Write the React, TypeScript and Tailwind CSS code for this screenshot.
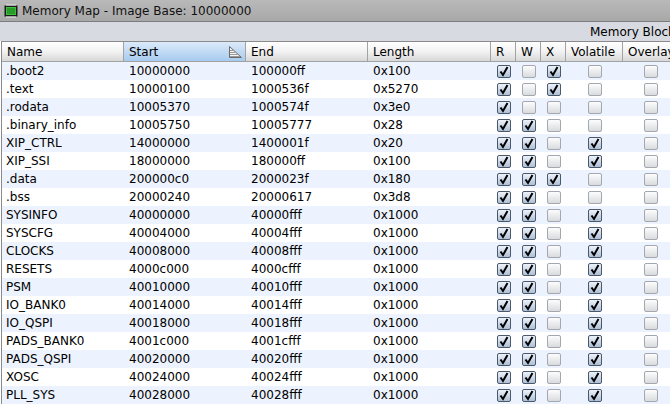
import React from "react";

type Row = {
  name: string;
  start: string;
  end: string;
  length: string;
  r: boolean;
  w: boolean;
  x: boolean;
  volatile: boolean;
  overlay: boolean;
};

const io = (name: string, start: string, end: string): Row => ({
  name,
  start,
  end,
  length: "0x1000",
  r: true,
  w: true,
  x: false,
  volatile: true,
  overlay: false
});

const rows: Row[] = [
  { name: ".boot2", start: "10000000", end: "100000ff", length: "0x100", r: true, w: false, x: true, volatile: false, overlay: false },
  { name: ".text", start: "10000100", end: "1000536f", length: "0x5270", r: true, w: false, x: true, volatile: false, overlay: false },
  { name: ".rodata", start: "10005370", end: "1000574f", length: "0x3e0", r: true, w: false, x: false, volatile: false, overlay: false },
  { name: ".binary_info", start: "10005750", end: "10005777", length: "0x28", r: true, w: true, x: false, volatile: false, overlay: false },
  { name: "XIP_CTRL", start: "14000000", end: "1400001f", length: "0x20", r: true, w: true, x: false, volatile: true, overlay: false },
  { name: "XIP_SSI", start: "18000000", end: "180000ff", length: "0x100", r: true, w: true, x: false, volatile: true, overlay: false },
  { name: ".data", start: "200000c0", end: "2000023f", length: "0x180", r: true, w: true, x: true, volatile: false, overlay: false },
  { name: ".bss", start: "20000240", end: "20000617", length: "0x3d8", r: true, w: true, x: false, volatile: false, overlay: false },
  io("SYSINFO", "40000000", "40000fff"),
  io("SYSCFG", "40004000", "40004fff"),
  io("CLOCKS", "40008000", "40008fff"),
  io("RESETS", "4000c000", "4000cfff"),
  io("PSM", "40010000", "40010fff"),
  io("IO_BANK0", "40014000", "40014fff"),
  io("IO_QSPI", "40018000", "40018fff"),
  io("PADS_BANK0", "4001c000", "4001cfff"),
  io("PADS_QSPI", "40020000", "40020fff"),
  io("XOSC", "40024000", "40024fff"),
  io("PLL_SYS", "40028000", "40028fff")
];

const cols = "grid grid-cols-[122px_122px_122px_123px_25px_25px_25px_57px_60px]";

function ChipIcon() {
  return (
    <svg width="16" height="16" viewBox="0 0 16 16" className="shrink-0">
      <rect x="1.5" y="2.5" width="13" height="11" fill="#1c1c1c" />
      <rect x="3" y="4" width="10" height="8" fill="#3fbf3f" />
      <rect x="4" y="5" width="8" height="6" fill="#2a9a2a" />
      {[4, 6, 8, 10, 12].map((x) => (
        <g key={x}>
          <rect x={x - 0.5} y="1" width="1" height="2" fill="#e8e8e8" />
          <rect x={x - 0.5} y="13" width="1" height="2" fill="#e8e8e8" />
        </g>
      ))}
    </svg>
  );
}

function SortIcon() {
  return (
    <svg width="14" height="12" viewBox="0 0 14 12" className="shrink-0">
      <path d="M1.5 0.5 L1.5 11.5 L13.5 11.5 Z" fill="#f4f4f4" stroke="#6a6a6a" strokeWidth="1" />
      <path d="M2 4.5 H5 M2 6.5 H7 M2 8.5 H9.5 M2 10.5 H12" stroke="#9a9a9a" strokeWidth="1" />
    </svg>
  );
}

function Check({ on }: { on: boolean }) {
  return (
    <div
      className={
        on
          ? "relative h-[13px] w-[14px] rounded-[2px] border border-[#4a586c] bg-gradient-to-b from-[#eef3fa] to-[#aebfd6]"
          : "relative h-[13px] w-[14px] rounded-[2px] border border-[#a3a8b0] bg-gradient-to-b from-[#fdfdfd] to-[#d9dbde]"
      }
    >
      {on && (
        <svg width="12" height="11" viewBox="0 0 12 11" className="absolute left-0 top-0">
          <path d="M2.5 5.5 L5 9 L9.5 1" fill="none" stroke="#000" strokeWidth="2" />
        </svg>
      )}
    </div>
  );
}

function HeadCell({ label, sorted }: { label: string; sorted?: boolean }) {
  return (
    <div
      className={
        (sorted
          ? "bg-gradient-to-b from-[#dceafa] to-[#a6cbef] "
          : "bg-gradient-to-b from-[#ffffff] via-[#f2f2f2] to-[#d8d8d8] ") +
        "flex h-[20px] items-center justify-between border-r border-b border-[#a2a2a2] pl-[5px] pr-[3px]"
      }
    >
      <span className="whitespace-nowrap">{label}</span>
      {sorted && <SortIcon />}
    </div>
  );
}

export default function App() {
  return (
    <div
      className="h-[406px] w-[670px] overflow-hidden bg-white text-[12px] text-black"
      style={{ fontFamily: '"DejaVu Sans", sans-serif' }}
    >
      <div className="flex h-[22px] items-center gap-[3px] border-b border-[#7c7c7c] bg-gradient-to-b from-[#b9b9b9] to-[#a8a8a8] pl-[3px] text-[#111]">
        <ChipIcon />
        <span className="whitespace-nowrap">Memory Map - Image Base: 10000000</span>
      </div>
      <div className="flex h-[19px] items-center overflow-hidden bg-[#d7dae0]">
        <span className="shrink-0 whitespace-nowrap pl-[590px]">Memory Blocks</span>
      </div>
      <div className="ml-px overflow-hidden border-l border-t border-[#8a8a8a]">
        <div className="w-[700px]">
          <div className={cols}>
            <HeadCell label="Name" />
            <HeadCell label="Start" sorted />
            <HeadCell label="End" />
            <HeadCell label="Length" />
            <HeadCell label="R" />
            <HeadCell label="W" />
            <HeadCell label="X" />
            <HeadCell label="Volatile" />
            <HeadCell label="Overlay" />
          </div>
          {rows.map((row, i) => (
            <div key={row.name} className={cols + " h-[18px] items-center " + (i % 2 === 0 ? "bg-[#edf3fe]" : "bg-white")}>
              <div className="whitespace-nowrap pl-[4px]">{row.name}</div>
              <div className="whitespace-nowrap pl-[5px]">{row.start}</div>
              <div className="whitespace-nowrap pl-[5px]">{row.end}</div>
              <div className="whitespace-nowrap pl-[5px]">{row.length}</div>
              <div className="flex justify-center"><Check on={row.r} /></div>
              <div className="flex justify-center"><Check on={row.w} /></div>
              <div className="flex justify-center"><Check on={row.x} /></div>
              <div className="flex justify-center"><Check on={row.volatile} /></div>
              <div className="flex justify-center pr-[5px]"><Check on={row.overlay} /></div>
            </div>
          ))}
        </div>
      </div>
    </div>
  );
}
